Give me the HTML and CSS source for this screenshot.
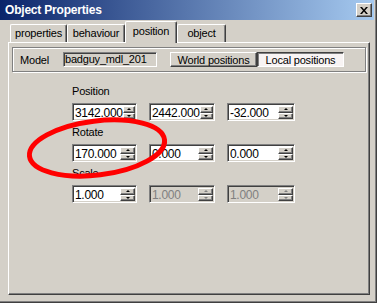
FILE: index.html
```html
<!DOCTYPE html>
<html lang="en">
<head>
    <meta charset="UTF-8">
    <title>Object Properties</title>
    <link rel="stylesheet" href="styles.css">
</head>
<body>

<div class="window">
    <div class="titlebar">
        <span class="title">Object Properties</span>
        <button type="button" class="close">
            <svg width="8" height="7" viewBox="0 0 8 7"><path d="M0 0h2l2 2.5L6 0h2L5 3.5 8 7H6L4 4.5 2 7H0l3-3.5z" fill="#000"/></svg>
        </button>
    </div>

    <div class="tabs">
        <div class="tab tab-properties">properties</div>
        <div class="tab tab-behaviour">behaviour</div>
        <div class="tab tab-position active">position</div>
        <div class="tab tab-object">object</div>
    </div>

    <div class="panel">
        <div class="model-row">
            <span class="model-label">Model</span>
            <div class="model-field">badguy_mdl_201</div>
            <div class="toggle">
                <button type="button" class="toggle-btn">World positions</button>
                <button type="button" class="toggle-btn pressed">Local positions</button>
            </div>
        </div>

        <div class="group">
            <div class="group-label">Position</div>
            <div class="spin-row">
                <div class="spin"><span class="value">3142.000</span><span class="arrows"><i class="up"></i><i class="down"></i></span></div>
                <div class="spin"><span class="value">2442.000</span><span class="arrows"><i class="up"></i><i class="down"></i></span></div>
                <div class="spin"><span class="value">-32.000</span><span class="arrows"><i class="up"></i><i class="down"></i></span></div>
            </div>
        </div>

        <div class="group">
            <div class="group-label">Rotate</div>
            <div class="spin-row">
                <div class="spin"><span class="value">170.000</span><span class="arrows"><i class="up"></i><i class="down"></i></span></div>
                <div class="spin"><span class="value">0.000</span><span class="arrows"><i class="up"></i><i class="down"></i></span></div>
                <div class="spin"><span class="value">0.000</span><span class="arrows"><i class="up"></i><i class="down"></i></span></div>
            </div>
        </div>

        <div class="group">
            <div class="group-label">Scale</div>
            <div class="spin-row">
                <div class="spin"><span class="value">1.000</span><span class="arrows"><i class="up"></i><i class="down"></i></span></div>
                <div class="spin disabled"><span class="value">1.000</span><span class="arrows"><i class="up"></i><i class="down"></i></span></div>
                <div class="spin disabled"><span class="value">1.000</span><span class="arrows"><i class="up"></i><i class="down"></i></span></div>
            </div>
        </div>
    </div>

    <!-- red marker drawn over the Rotate field -->
    <svg class="marker" width="377" height="303" viewBox="0 0 377 303">
        <ellipse cx="97" cy="148" rx="68" ry="27" transform="rotate(-7 97 148)" fill="none" stroke="#f00" stroke-width="5"/>
    </svg>
</div>

</body>
</html>
```

FILE: styles.css
```css
* {
    box-sizing: border-box;
}

body {
    margin: 0;
    font-family: "Liberation Sans", Arial, sans-serif;
    font-size: 11px;
    color: #000;
    background-color: #d4d0c8;
}

.window {
    position: relative;
    width: 377px;
    height: 303px;
    display: flex;
    flex-direction: column;
    background-color: #d4d0c8;
    padding-bottom: 8px;
    box-shadow: inset -1px -1px #404040, inset -2px -2px #808080;
}

.titlebar {
    height: 20px;
    margin-right: 3px;
    display: flex;
    align-items: center;
    justify-content: space-between;
    padding-left: 5px;
    background: linear-gradient(to right, #0a246a, #a6caf0);
}

.title {
    color: #fff;
    font-weight: bold;
    font-size: 12px;
    letter-spacing: -0.2px;
}

.close {
    width: 16px;
    height: 14px;
    margin-right: 2px;
    padding: 0;
    display: flex;
    align-items: center;
    justify-content: center;
    background: #d4d0c8;
    border: 1px solid;
    border-color: #fff #404040 #404040 #fff;
    box-shadow: inset -1px -1px #808080;
}

/* tab strip */
.tabs {
    height: 22px;
    display: flex;
    align-items: flex-end;
    padding-left: 10px;
}

.tab {
    height: 18px;
    line-height: 16px;
    text-align: center;
    background: #d4d0c8;
    border-top: 1px solid #fff;
    border-left: 1px solid #fff;
    border-right: 1px solid #404040;
    border-radius: 2px 2px 0 0;
    box-shadow: inset -1px 0 #808080;
    letter-spacing: -0.2px;
}

.tab-properties { width: 57px; }
.tab-behaviour { width: 58px; }
.tab-position { width: 52px; }
.tab-object { width: 49px; }

.tab.active {
    position: relative;
    z-index: 1;
    height: 22px;
    line-height: 19px;
    margin-bottom: -1px;
}

.panel {
    flex: 1;
    margin: 0 7px 0 8px;
    padding: 4px 3px 0;
    border: 1px solid;
    border-color: #fff #404040 #404040 #fff;
    box-shadow: inset -1px -1px #808080;
}

/* model row */
.model-row {
    height: 25px;
    display: flex;
    align-items: center;
    padding-left: 7px;
    border: 1px solid #808080;
    box-shadow: inset 1px 1px #fff, 1px 1px #fff;
}

.model-label {
    width: 43px;
    letter-spacing: -0.2px;
}

.model-field {
    width: 94px;
    height: 15px;
    line-height: 13px;
    padding-left: 1px;
    border: 1px solid;
    border-color: #808080 #fff #fff #808080;
    box-shadow: inset 1px 1px #404040;
    letter-spacing: -0.2px;
}

.toggle {
    display: flex;
    margin-left: 13px;
}

.toggle-btn {
    width: 87px;
    height: 15px;
    padding: 0;
    font-family: inherit;
    font-size: 11px;
    letter-spacing: -0.2px;
    line-height: 12px;
    color: #000;
    background: #d4d0c8;
    border: 1px solid;
    border-color: #fff #404040 #404040 #fff;
    box-shadow: inset -1px -1px #808080;
}

.toggle-btn.pressed {
    background: #f8f4f4;
    border-color: #404040 #fff #fff #404040;
    box-shadow: inset 1px 1px #808080;
}

/* spin fields */
.group {
    margin-left: 60px;
    margin-top: 13px;
}

.group + .group {
    margin-top: 5px;
}

.group-label {
    height: 13px;
    line-height: 13px;
    margin-bottom: 5px;
    letter-spacing: -0.2px;
}

.spin-row {
    display: grid;
    grid-template-columns: 65px 66px 68px;
    column-gap: 12px;
}

.spin {
    height: 18px;
    display: flex;
    padding: 2px 1px 1px 2px;
    background: #fff;
    border: 1px solid;
    border-color: #808080 #fff #fff #808080;
    box-shadow: inset 1px 1px #404040, inset -1px -1px #d4d0c8;
}

.value {
    flex: 1;
    line-height: 14px;
    font-size: 12px;
    letter-spacing: -0.3px;
}

.arrows {
    width: 15px;
    display: flex;
    flex-direction: column;
}

.arrows i {
    height: 7px;
    display: flex;
    align-items: center;
    justify-content: center;
    background: #d4d0c8;
    border: 1px solid;
    border-color: #fff #404040 #404040 #fff;
    box-shadow: inset -1px -1px #808080;
}

.arrows i::after {
    content: "";
    border-left: 2px solid transparent;
    border-right: 2px solid transparent;
}

.up::after {
    border-bottom: 2px solid #000;
}

.down::after {
    border-top: 2px solid #000;
}

.spin.disabled {
    background: #d4d0c8;
    color: #808080;
}

.spin.disabled .up::after {
    border-bottom-color: #808080;
}

.spin.disabled .down::after {
    border-top-color: #808080;
}

.marker {
    position: absolute;
    top: 0;
    left: 0;
    pointer-events: none;
}
```
